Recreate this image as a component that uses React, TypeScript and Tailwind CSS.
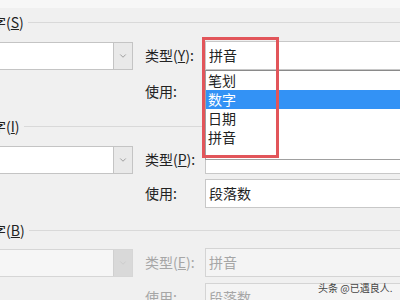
import { ChevronDown } from 'lucide-react'

function GroupHeader({ label, hotkey, className }: { label: string; hotkey: string; className: string }) {
  return (
    <div className={`flex items-center h-[14px] leading-none ${className}`}>
      <span className="-ml-[64px] whitespace-nowrap">
        {label}(<u>{hotkey}</u>)
      </span>
      <div className="flex-1 h-px bg-[#d9d9d9] ml-[4px]" />
    </div>
  )
}

function LeftCombo({ disabled = false }: { disabled?: boolean }) {
  return (
    <div
      className={`w-[133px] h-[28px] flex border border-l-0 ${
        disabled ? 'border-[#d6d6d6] bg-[#f6f6f6]' : 'border-[#c4c4c4] bg-white'
      }`}
    >
      <div className="flex-1" />
      <div
        className={`w-[19px] flex items-center justify-center border-l ${
          disabled ? 'bg-[#d9d9d9] border-[#d0d0d0]' : 'bg-[#e9e9e9] border-[#c4c4c4]'
        }`}
      >
        <ChevronDown size={10} strokeWidth={1.5} className={disabled ? 'text-[#c4c4c4]' : 'text-[#707070]'} />
      </div>
    </div>
  )
}

function Row({
  left,
  label,
  hotkey,
  value,
  disabled = false,
  className,
}: {
  left?: React.ReactNode
  label: string
  hotkey?: string
  value?: string
  disabled?: boolean
  className: string
}) {
  return (
    <div className={`flex items-center h-[29px] ${className}`}>
      <div className="w-[133px] shrink-0">{left}</div>
      <div className={`ml-[12px] w-[60px] shrink-0 whitespace-nowrap ${disabled ? 'text-[#a6a6a6]' : ''}`}>
        {hotkey ? (
          <>
            {label}(<u>{hotkey}</u>):
          </>
        ) : (
          <>{label}:</>
        )}
      </div>
      <div
        className={`w-[200px] shrink-0 h-[29px] flex items-center pl-[3px] border ${
          disabled ? 'bg-[#f4f4f4] border-[#d4d4d4] text-[#a6a6a6]' : 'bg-white border-[#c8c8c8]'
        }`}
      >
        {value}
      </div>
    </div>
  )
}

export default function App() {
  const items = ['笔划', '数字', '日期', '拼音']

  return (
    <div className="relative w-[400px] h-[300px] overflow-hidden bg-[#f0f0f0] text-[14px] text-[#222] font-['Noto_Sans_CJK_SC',sans-serif]">
      <div className="h-[8px] bg-[#f7f7f7]" />

      <GroupHeader label="主要关键字" hotkey="S" className="mt-[7px]" />
      <Row left={<LeftCombo />} label="类型" hotkey="Y" value="拼音" className="mt-[12px]" />
      <Row label="使用" value="段落数" className="mt-[7px]" />

      <GroupHeader label="次要关键字" hotkey="I" className="mt-[13px]" />
      <Row left={<LeftCombo />} label="类型" hotkey="P" className="mt-[12px]" />
      <Row label="使用" value="段落数" className="mt-[5px]" />

      <GroupHeader label="第三关键字" hotkey="B" className="mt-[15px]" />
      <Row left={<LeftCombo disabled />} label="类型" hotkey="E" value="拼音" disabled className="mt-[11px]" />
      <Row label="使用" value="段落数" disabled className="mt-[6px]" />

      {/* open dropdown list */}
      <div className="absolute left-[205px] top-[70px] w-[200px] h-[90px] bg-white border-t border-l border-b border-t-[#8a8a8a] border-l-[#a0a0a0] border-b-[#a0a0a0]">
        {items.map((item) => (
          <div
            key={item}
            className={`h-[19px] flex items-center pl-[2px] ${item === '数字' ? 'bg-[#3392f5] text-white' : ''}`}
          >
            {item}
          </div>
        ))}
      </div>

      {/* red annotation box */}
      <div className="absolute left-[202px] top-[37px] w-[77px] h-[121px] border-[3px] border-[#e2555a]" />

      {/* watermark */}
      <div className="absolute left-[318px] top-[280px] text-[10px] text-[#444] whitespace-nowrap">头条 @已遇良人.</div>
    </div>
  )
}
